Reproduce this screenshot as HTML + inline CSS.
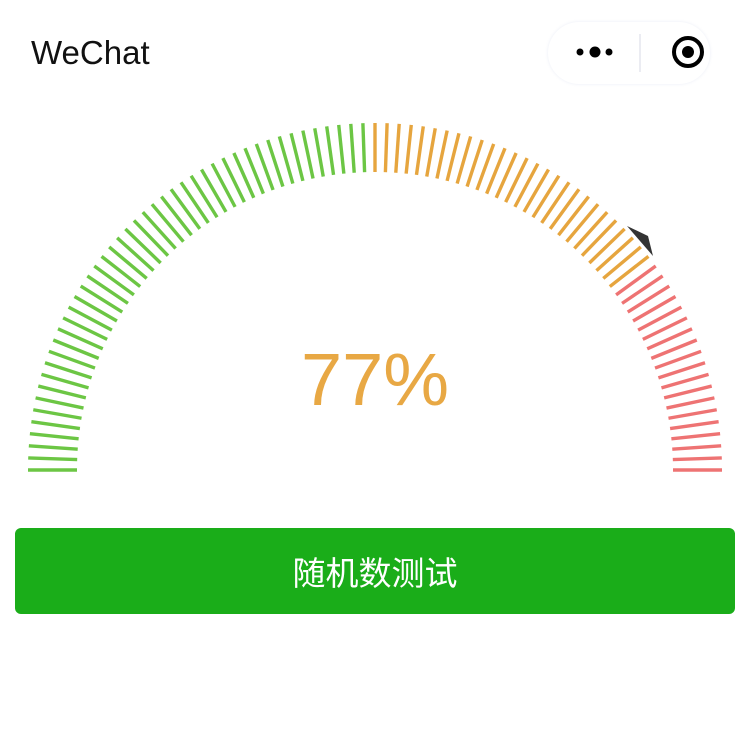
<!DOCTYPE html>
<html><head><meta charset="utf-8"><style>
body{margin:0;width:750px;height:750px;background:#fff;overflow:hidden;position:relative;font-family:"Liberation Sans","Noto Sans CJK SC",sans-serif}
.title{position:absolute;left:31px;top:34px;font-size:33px;color:#111}
.cap{position:absolute;left:548px;top:22px;width:162px;height:62px;border-radius:31px;background:#fff;box-shadow:0 0 3px rgba(220,225,240,.6)}
.pct{position:absolute;left:0;width:750px;text-align:center;top:337px;font-size:74px;color:#e8a844;font-weight:normal}
.btn{position:absolute;left:15px;top:528px;width:720px;height:86px;border-radius:6px;background:#1aad19;color:#fff;font-size:33px;text-align:center;line-height:92px}
</style></head><body>
<div class="title">WeChat</div>
<div class="cap"></div>
<svg width="750" height="750" style="position:absolute;left:0;top:0">
<circle cx="580" cy="52" r="3.5" fill="#000"/><circle cx="595" cy="52" r="5.5" fill="#000"/><circle cx="609" cy="52" r="3.5" fill="#000"/>
<line x1="640" y1="34" x2="640" y2="72" stroke="#e4e6ee" stroke-width="1.5"/>
<circle cx="688" cy="52" r="14" fill="none" stroke="#000" stroke-width="4"/><circle cx="688" cy="52" r="6" fill="#000"/>
<g id="g" stroke-width="3.4"></g>
<polygon points="627,226 648,236 653,256" fill="#333"/>
</svg>
<div class="pct">77%</div>
<div class="btn">随机数测试</div>
<script>
var g=document.getElementById('g'),s='';
for(var i=0;i<=90;i++){var a=Math.PI-i*Math.PI/90,c=Math.cos(a),n=Math.sin(a);
var col=i<45?'#6cc644':(i<72?'#e6a53e':'#ee7373');
s+='<line x1="'+(375+298*c)+'" y1="'+(470-298*n)+'" x2="'+(375+347*c)+'" y2="'+(470-347*n)+'" stroke="'+col+'"/>';}
g.innerHTML=s;
</script>
</body></html>
